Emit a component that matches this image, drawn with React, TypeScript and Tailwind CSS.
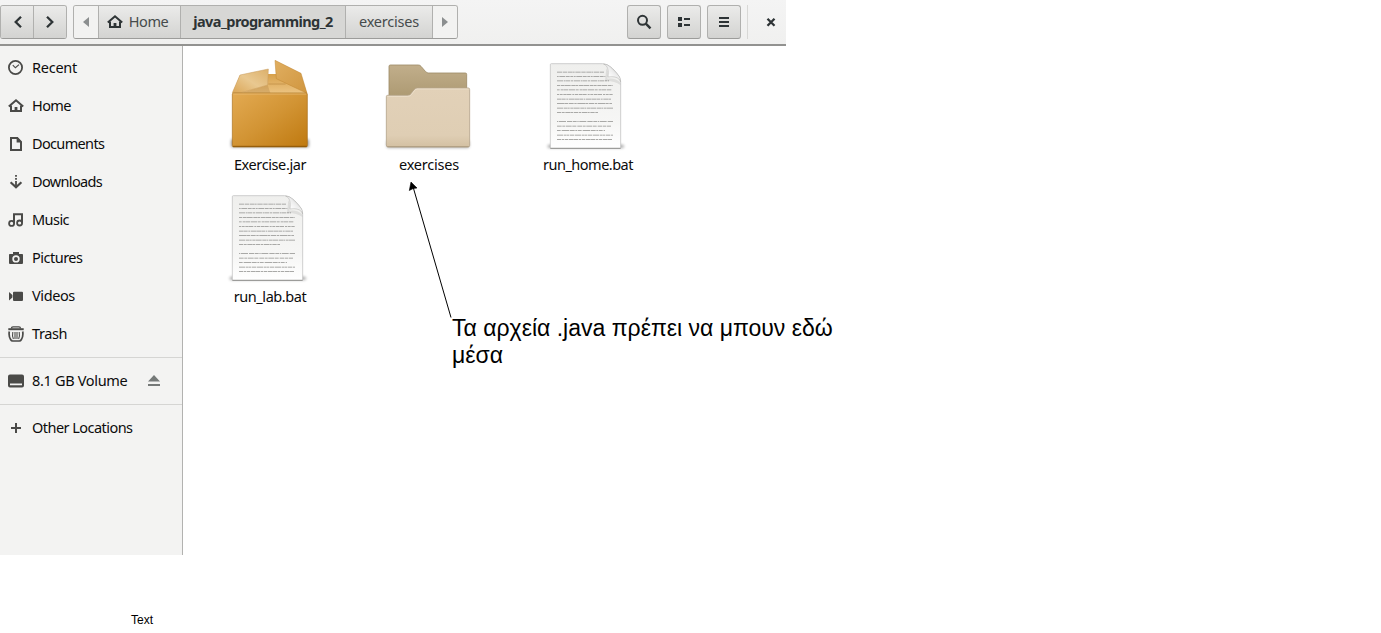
import type { ReactNode } from "react";

const FONT = "font-['Noto_Sans','Open_Sans',sans-serif]";

/* ---------- symbolic icons ---------- */

function Sym({ children, className = "text-[#4a4a48]" }: { children: ReactNode; className?: string }) {
  return (
    <svg viewBox="0 0 16 16" className={`h-4 w-4 shrink-0 ${className}`} fill="none" stroke="currentColor">
      {children}
    </svg>
  );
}

const Recent = () => (
  <Sym>
    <circle cx="7.5" cy="7.5" r="6.6" strokeWidth="1.8" />
    <path d="M4.8 5.2 7.4 7.8 11 4.6" strokeWidth="1.2" />
  </Sym>
);
const House = ({ className }: { className?: string }) => (
  <Sym className={className}>
    <path d="M.8 8.6 8 2.3l7.2 6.3" strokeWidth="2" />
    <path d="M3 7.5V13h10V7.5" strokeWidth="2" />
    <path d="M6.6 14V9h2.8v5z" fill="currentColor" stroke="none" />
  </Sym>
);
const Documents = () => (
  <Sym>
    <path d="M3 2h6.2L13 5.9V14H3z" strokeWidth="2" />
    <path d="M8.6 1v5.4H14L9.5 1z" fill="currentColor" stroke="none" />
  </Sym>
);
const Downloads = () => (
  <Sym>
    <path d="M8 1v1.7M8 4v1.7M8 7v5" strokeWidth="1.8" />
    <path d="m2.6 8.2 5.4 5 5.4-5" strokeWidth="2.2" />
  </Sym>
);
const Music = () => (
  <Sym>
    <path d="M6 11.4V2.2h8v8.6" strokeWidth="2" />
    <circle cx="3.6" cy="11.4" r="2.5" strokeWidth="1.8" />
    <circle cx="11.6" cy="11" r="2.5" strokeWidth="1.8" />
  </Sym>
);
const Pictures = () => (
  <Sym>
    <path
      d="M5 2h6v2h3.2q.8 0 .8.8V13q0 1-1 1H2q-1 0-1-1V4.8Q1 4 1.8 4H5zM8 5.2a3.7 3.7 0 1 0 0 7.4 3.7 3.7 0 0 0 0-7.4z"
      fill="currentColor"
      fillRule="evenodd"
      stroke="none"
    />
    <circle cx="8" cy="8.9" r="2" fill="currentColor" stroke="none" />
  </Sym>
);
const Videos = () => (
  <Sym>
    <path d="M1 4v8.5l3.4-3V7zM6 3.7h8q1 0 1 1V12q0 1-1 1H6q-1 0-1-1V4.7q0-1 1-1z" fill="currentColor" stroke="none" />
  </Sym>
);
const Trash = () => (
  <Sym>
    <path d="M.3 3.2h15.4" strokeWidth="2" />
    <path d="M3.5 2.5q0-1.7 1.5-1.7h6q1.5 0 1.5 1.7" strokeWidth="1.3" />
    <path d="M1.3 5.5q-.8 4.5 1.3 8 .8 1.5 2 1.5h6.8q1.2 0 2-1.5 2.1-3.5 1.3-8" strokeWidth="1.7" />
    <path d="M4.8 6q-.8 4 .6 7M11.2 6q.8 4-.6 7M7 6v7M9 6v7" strokeWidth="1.1" />
  </Sym>
);
const Drive = () => (
  <Sym>
    <path
      d="M2 1.5h12q2 0 2 2v9q0 2-2 2H2q-2 0-2-2v-9q0-2 2-2zM2 10.5v1.8h12v-1.8z"
      fill="currentColor"
      fillRule="evenodd"
      stroke="none"
    />
  </Sym>
);
const Plus = () => (
  <Sym>
    <path d="M8 3v10M3 8h10" strokeWidth="2" />
  </Sym>
);
const Eject = () => (
  <Sym className="text-[#757978]">
    <path d="M8 2 14 8.500H2zM2 11h12v2H2z" fill="currentColor" stroke="none" />
  </Sym>
);

/* ---------- file icons ---------- */

function Package() {
  return (
    <svg viewBox="21 18 288 288" className="h-24 w-24">
      <defs>
        <linearGradient id="boxFront" x1="0" y1="0" x2="1" y2="1">
          <stop offset="0" stopColor="#e3aa52" />
          <stop offset=".5" stopColor="#d29434" />
          <stop offset="1" stopColor="#bf790f" />
        </linearGradient>
        <linearGradient id="boxLeft" x1="0" y1="1" x2="1" y2="0">
          <stop offset="0" stopColor="#dba656" />
          <stop offset=".5" stopColor="#e9c890" />
          <stop offset="1" stopColor="#dcb06a" />
        </linearGradient>
        <linearGradient id="boxRight" x1="0" y1="0" x2="1" y2="1">
          <stop offset="0" stopColor="#e0ae60" />
          <stop offset="1" stopColor="#d0963f" />
        </linearGradient>
        <linearGradient id="boxIn" x1="0" y1="0" x2="0" y2="1">
          <stop offset="0" stopColor="#d7a04a" />
          <stop offset="1" stopColor="#ecc482" />
        </linearGradient>
        <filter id="boxBlur" x="-10%" y="-100%" width="120%" height="300%">
          <feGaussianBlur stdDeviation="5" />
        </filter>
      </defs>
      <rect x="48" y="268" width="234" height="24" rx="4" fill="#000" opacity=".4" filter="url(#boxBlur)" />
      <path d="M75 75 158 72h98l20 58H52z" fill="url(#boxIn)" />
      <path d="M160 102h52" stroke="#bd8941" strokeWidth="2" />
      <path d="m80 129 78-24 8 24z" fill="#a87a3c" opacity=".3" />
      <path d="m52 128 23-53 85-18-2 48-83 24z" fill="url(#boxLeft)" stroke="#c99d5e" strokeWidth="1.5" />
      <path d="m180 31 78 39 18 60-92-44z" fill="url(#boxRight)" stroke="#c08633" strokeWidth="1.5" />
      <rect x="52" y="129" width="225" height="162" rx="4" fill="url(#boxFront)" stroke="#a86f1c" strokeWidth="2" />
      <path d="M55 132h219" stroke="#e8bb74" strokeWidth="2.5" />
      <path d="M54 289h221" stroke="#8d5708" strokeWidth="3" />
    </svg>
  );
}

function Folder() {
  return (
    <svg viewBox="18 18 288 288" className="h-24 w-24">
      <defs>
        <linearGradient id="fBack" x1="0" y1="0" x2="0" y2="1">
          <stop offset="0" stopColor="#c1ae8b" />
          <stop offset="1" stopColor="#ab9870" />
        </linearGradient>
        <linearGradient id="fFront" x1="0" y1="0" x2="0" y2="1">
          <stop offset="0" stopColor="#e2d1b8" />
          <stop offset=".8" stopColor="#dfceb4" />
          <stop offset="1" stopColor="#d3c0a2" />
        </linearGradient>
        <filter id="folderBlur" x="-10%" y="-100%" width="120%" height="300%">
          <feGaussianBlur stdDeviation="4" />
        </filter>
      </defs>
      <rect x="35" y="272" width="248" height="22" rx="5" fill="#000" opacity=".3" filter="url(#folderBlur)" />
      <path
        d="M42 150V49q0-4 4-4h84q5 0 8 4l14 16q4 4 9 4h110q4 0 4 4v77z"
        fill="url(#fBack)"
        stroke="#9d8b68"
        strokeWidth="2.5"
      />
      <path
        d="M34 285V140q0-4 4-4h60q7 0 10-5l9-12q4-5 10-5h153q4 0 4 5v167q0 5-5 5H39q-5 0-5-6z"
        fill="url(#fFront)"
        stroke="#b5a48a"
        strokeWidth="2.5"
      />
      <path d="M37 139h61q8 0 12-6l9-12q3-4 8-4h153" fill="none" stroke="#f0e5d3" strokeWidth="2" />
      <path d="M37 290h244" stroke="#a8977c" strokeWidth="2.5" />
    </svg>
  );
}

const LINES: [number, number, string][] = [
  [66, 208, "16 2 13 2 14 1 5 2"],
  [79, 211, "5 2 18 2 11 2 9 2"],
  [92, 222, "19 2 5 1 12 2 8 2"],
  [106, 233, "9 2 12 1 17 2 11 1"],
  [119, 229, "8 3 7 1 14 2 20 2"],
  [133, 233, "6 2 9 2 10 1 13 3"],
  [147, 228, "14 1 11 2 5 2 16 1"],
  [160, 231, "23 1 9 2 15 2 7 2"],
  [174, 234, "18 2 12 1 5 2 9 1"],
  [187, 190, "13 2 8 2 16 1 6 2"],
  [214, 234, "4 2 21 3 16 2 11 2"],
  [228, 228, "14 2 9 2 17 2 12 3"],
  [241, 210, "11 3 22 2 15 2 6 2"],
  [255, 234, "19 2 8 1 6 2 14 2"],
  [268, 233, "12 2 7 2 10 2 15 1"],
];

function TextFile({ id }: { id: string }) {
  return (
    <svg viewBox="15 18 288 288" className="h-24 w-24">
      <defs>
        <linearGradient id={`${id}p`} x1="0" y1="0" x2="0" y2="1">
          <stop offset="0" stopColor="#efefed" />
          <stop offset=".7" stopColor="#f6f6f5" />
          <stop offset="1" stopColor="#fff" />
        </linearGradient>
        <linearGradient id={`${id}c`} x1="0" y1="1" x2=".9" y2=".1">
          <stop offset="0" stopColor="#b4b4b2" />
          <stop offset=".3" stopColor="#fff" />
          <stop offset=".6" stopColor="#eee" />
          <stop offset="1" stopColor="#c8c8c6" />
        </linearGradient>
        <filter id={`${id}s`} x="-10%" y="-100%" width="120%" height="300%">
          <feGaussianBlur stdDeviation="4" />
        </filter>
      </defs>
      <rect x="38" y="284" width="229" height="10" rx="5" fill="#000" opacity=".35" filter={`url(#${id}s)`} />
      <path
        d="M46 44q0-3 3-3h154q14 0 30 15l10 11q14 14 14 30v195q0 3-3 3H49q-3 0-3-3z"
        fill={`url(#${id}p)`}
        stroke="#bababa"
        strokeWidth="2"
      />
      <path d="M46 295h211" stroke="#858583" strokeWidth="2.5" />
      {LINES.map(([y, x, dash]) => (
        <path key={y} d={`M66 ${y}.5H${x}`} stroke="#a9a9a7" strokeWidth="3" strokeDasharray={dash} />
      ))}
      <path d="M214 55q8 14 3 31 24-4 39 11v8q-18-13-46-12z" fill="#000" opacity=".08" />
      <path
        d="M206 42c12 4 16 20 13 39 18-3 33 1 38 14 0-13-6-19-17-31S220 43 206 42z"
        fill={`url(#${id}c)`}
        stroke="#9f9f9d"
        strokeWidth="1.2"
      />
    </svg>
  );
}

/* ---------- layout ---------- */

const BTN = "flex items-center justify-center bg-linear-to-b from-[#ebebea] to-[#d3d3d1]";
const BOX = "border border-[#b0b0ae] border-b-[#9c9c9a] rounded-[3px]";

function ToolButton({ children }: { children: ReactNode }) {
  return <div className={`${BTN} ${BOX} h-[34px] w-[34px] text-[#2e3436]`}>{children}</div>;
}

function HeaderBar() {
  return (
    <header className="flex h-[46px] w-[786px] items-start border-b-2 border-[#929290] bg-linear-to-b from-[#f4f4f4] to-[#f0f0ef] pt-[5px] text-[#2e3436]">
      <div className={`flex h-[34px] w-[67px] overflow-hidden ${BOX}`}>
        <div className={`${BTN} w-[33px] border-r border-[#b0b0ae] pl-px`}>
          <Sym className="text-[#2e3436]">
            <path d="m11 2.7-5.3 5.3L11 13.3" strokeWidth="2.3" />
          </Sym>
        </div>
        <div className={`${BTN} flex-1`}>
          <Sym className="text-[#2e3436]">
            <path d="m5 2.7 5.3 5.3L5 13.3" strokeWidth="2.3" />
          </Sym>
        </div>
      </div>
      <nav className={`ml-[6px] flex h-[34px] w-[385px] overflow-hidden ${BOX} text-[14.5px] leading-5`}>
        <div className="flex w-[25px] items-center justify-center border-r border-[#b0b0ae] bg-[#f2f2f1]">
          <svg viewBox="0 0 6 10" className="h-[10px] w-[6px]">
            <path d="M6 0v10L0 5z" fill="#8b8e8f" />
          </svg>
        </div>
        <div className={`${BTN} w-[82px] gap-[6px] border-r border-[#b0b0ae] pr-[4px]`}>
          <House className="text-[#2e3436]" />
          <span className="-mt-[2px] tracking-[-0.4px] text-[#464b4c]">Home</span>
        </div>
        <div className="flex w-[165px] items-center justify-center border-r border-[#b0b0ae] bg-[#d7d7d5]">
          <span className="-mt-[2px] font-bold tracking-[-0.57px]">java_programming_2</span>
        </div>
        <div className={`${BTN} w-[87px] border-r border-[#b0b0ae]`}>
          <span className="-mt-[2px] tracking-[-0.2px] text-[#464b4c]">exercises</span>
        </div>
        <div className="flex flex-1 items-center justify-center bg-[#f2f2f1]">
          <svg viewBox="0 0 6 10" className="h-[10px] w-[6px]">
            <path d="M0 0v10l6-5z" fill="#8b8e8f" />
          </svg>
        </div>
      </nav>
      <div className="ml-auto flex items-center">
        <div className="flex gap-[6px]">
          <ToolButton>
            <Sym className="text-[#2e3436]">
              <circle cx="6.5" cy="6.3" r="4.5" strokeWidth="2" />
              <path d="m9.8 9.6 4.7 4.7" strokeWidth="2.4" />
            </Sym>
          </ToolButton>
          <ToolButton>
            <Sym className="text-[#2e3436]">
              <path d="M2 3h4v4H2zM2 9h4v4H2zM8 4h6v2H8zM8 10h6v2H8z" fill="currentColor" stroke="none" />
            </Sym>
          </ToolButton>
          <ToolButton>
            <Sym className="text-[#2e3436]">
              <path d="M3 4h10M3 8h10M3 12h10" strokeWidth="2" />
            </Sym>
          </ToolButton>
        </div>
        <div className="ml-[6px] h-[34px] w-px bg-[#d8d8d6]" />
        <div className="flex w-[38px] pl-[15px]">
          <Sym className="text-[#2e3436]">
            <path d="m4.5 4.7 7 7m0-7-7 7" strokeWidth="2.3" />
          </Sym>
        </div>
      </div>
    </header>
  );
}

function Place({ icon, label, tracking, extra }: { icon: ReactNode; label: string; tracking: string; extra?: ReactNode }) {
  return (
    <li className="flex h-[38px] items-center pl-2">
      {icon}
      <span className={`-mt-[2px] ml-2 w-[114px] whitespace-nowrap text-[14.5px] leading-5 text-[#0c0c0c] ${tracking}`}>
        {label}
      </span>
      {extra}
    </li>
  );
}

function Sidebar() {
  return (
    <aside className="h-[509px] w-[183px] border-r border-[#b2b2b0] bg-[#f3f3f2] pt-[3px]">
      <ul>
        <Place icon={<Recent />} label="Recent" tracking="tracking-[-0.25px]" />
        <Place icon={<House />} label="Home" tracking="tracking-[-0.6px]" />
        <Place icon={<Documents />} label="Documents" tracking="tracking-[-0.65px]" />
        <Place icon={<Downloads />} label="Downloads" tracking="tracking-[-0.65px]" />
        <Place icon={<Music />} label="Music" tracking="tracking-[-0.55px]" />
        <Place icon={<Pictures />} label="Pictures" tracking="tracking-[-0.5px]" />
        <Place icon={<Videos />} label="Videos" tracking="tracking-[-0.4px]" />
        <Place icon={<Trash />} label="Trash" tracking="tracking-[-0.4px]" />
      </ul>
      <hr className="my-1 border-[#d5d5d3]" />
      <ul>
        <Place icon={<Drive />} label="8.1 GB Volume" tracking="tracking-[-0.32px]" extra={<Eject />} />
      </ul>
      <hr className="my-1 border-[#d5d5d3]" />
      <ul>
        <Place icon={<Plus />} label="Other Locations" tracking="tracking-[-0.54px]" />
      </ul>
    </aside>
  );
}

function FileItem({ icon, name, tracking }: { icon: ReactNode; name: string; tracking: string }) {
  return (
    <figure className="flex h-[132px] w-[159px] flex-col items-center pr-px">
      {icon}
      <figcaption className={`mt-[2px] text-[14.5px] leading-5 text-[#0c0c0c] ${tracking}`}>{name}</figcaption>
    </figure>
  );
}

export default function App() {
  return (
    <div className={`relative h-[633px] w-[1381px] overflow-hidden bg-white ${FONT}`}>
      <HeaderBar />
      <div className="flex">
        <Sidebar />
        <main className="grid w-[603px] auto-rows-[132px] grid-cols-[159px_159px_159px] content-start pt-[10px] pl-[8px]">
          <FileItem icon={<Package />} name="Exercise.jar" tracking="tracking-[-0.4px]" />
          <FileItem icon={<Folder />} name="exercises" tracking="tracking-[-0.2px]" />
          <FileItem icon={<TextFile id="a" />} name="run_home.bat" tracking="tracking-[-0.5px]" />
          <FileItem icon={<TextFile id="b" />} name="run_lab.bat" tracking="tracking-[-0.45px]" />
        </main>
      </div>
      <p className="mt-[58px] ml-[131px] font-['Liberation_Sans',Arial,sans-serif] text-[12px] leading-[14px] text-black">Text</p>

      <svg viewBox="0 0 60 150" className="absolute top-[175px] left-[400px] h-[150px] w-[60px]">
        <path d="M12.5 10 51 142.5" stroke="#000" strokeWidth="1" />
        <path d="m11 7 6 6-3.8.5L9.3 15.5z" fill="#000" stroke="#000" strokeWidth=".6" />
      </svg>
      <p className="absolute top-[315px] left-[452px] w-[400px] font-['Liberation_Sans',Arial,sans-serif] text-[23px] leading-[27px] text-black">
        Τα αρχεία .java πρέπει να μπουν εδώ
        <br />
        μέσα
      </p>
    </div>
  );
}
